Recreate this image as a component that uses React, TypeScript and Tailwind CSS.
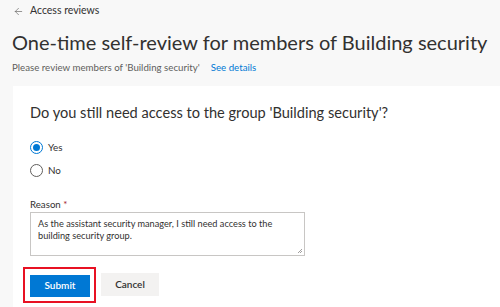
import { ArrowLeft } from 'lucide-react';

export default function App() {
    return (
        <div className="w-[500px] h-[307px] overflow-hidden bg-[#f8f8f8] text-[#323130]" style={{ fontFamily: 'Lato, "Noto Sans", sans-serif' }}>
            <div className="pl-[12px] pt-[3px]">
                <div className="flex items-center gap-[6px] h-[16px] text-[10.5px]">
                    <ArrowLeft className="ml-[1px] w-[11px] h-[11px] text-[#605e5c]" strokeWidth={1.4} />
                    <span>Access reviews</span>
                </div>
                <h1 className="mt-[10px] text-[20px] leading-[26px] font-normal whitespace-nowrap">
                    One-time self-review for members of Building security
                </h1>
                <div className="mt-[5px] flex items-center gap-[11px] text-[9.7px] leading-[14px] whitespace-nowrap">
                    <span className="text-[#605e5c]">Please review members of 'Building security'</span>
                    <span className="text-[#0078d4]">See details</span>
                </div>
            </div>
            <div className="ml-[13px] mt-[12px] bg-white pl-[17px] pt-[17px] h-[240px]">
                <div className="text-[14.6px] leading-[20px] whitespace-nowrap">Do you still need access to the group 'Building security'?</div>
                <div className="mt-[17px] flex flex-col gap-[9px] text-[9.8px]">
                    <div className="flex items-center gap-[5px] h-[14px]">
                        <span className="w-[13px] h-[13px] rounded-full border border-[#0078d4] flex items-center justify-center">
                            <span className="w-[7px] h-[7px] rounded-full bg-[#0078d4]" />
                        </span>
                        <span>Yes</span>
                    </div>
                    <div className="flex items-center gap-[5px] h-[14px]">
                        <span className="w-[13px] h-[13px] rounded-full border border-[#605e5c]" />
                        <span>No</span>
                    </div>
                </div>
                <div className="mt-[20px] text-[9.7px] leading-[14px]">
                    Reason <span className="text-[#a4262c]">*</span>
                </div>
                <div className="mt-[1px] relative w-[275px] h-[44px] border border-[#c8c6c4] px-[7px] pt-[5px] text-[9.2px] leading-[12px]">
                    As the assistant security manager, I still need access to the building security group.
                    <svg className="absolute right-[1px] bottom-[1px]" width="6" height="6" viewBox="0 0 6 6">
                        <path d="M5 1 L1 5 M5 3 L3 5" stroke="#8a8886" strokeWidth="0.8" />
                    </svg>
                </div>
                <div className="mt-[11px] flex items-center gap-[5px]">
                    <div className="-ml-[7px] border-2 border-[#e81123] pl-[5px] pr-[4px] pt-[2px] pb-[4px]">
                        <button className="w-[60px] h-[22px] bg-[#0078d4] text-white text-[10px] font-semibold">Submit</button>
                    </div>
                    <button className="w-[58px] h-[23px] bg-[#f3f2f1] text-[10px] font-semibold">Cancel</button>
                </div>
            </div>
        </div>
    );
}
